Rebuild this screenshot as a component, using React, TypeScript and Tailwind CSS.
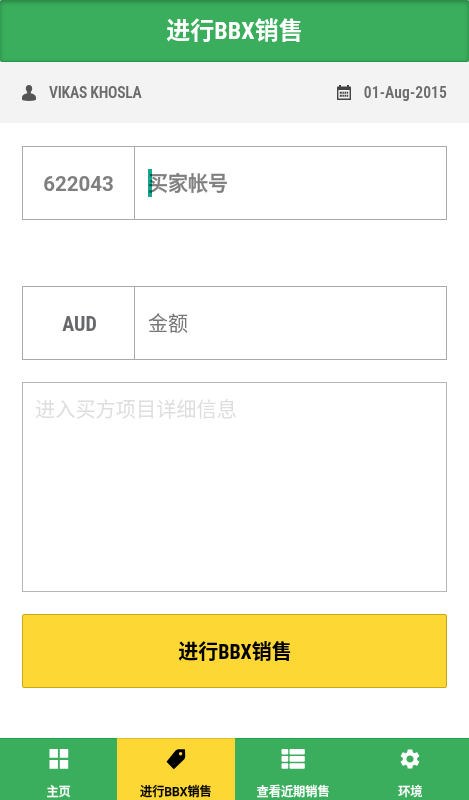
import type { ReactNode } from "react";

interface Tab {
    label: string;
    icon: ReactNode;
    active?: boolean;
}

const GridIcon = () => (
    <svg width="20" height="20" viewBox="0 0 20 20" fill="currentColor">
        <path d="M0.5 0h8.4v8.8H0.5zM10.8 0h8.4v8.8h-8.4zM0.5 11h8.4v8.8H0.5zM10.8 11h8.4v8.8h-8.4z" />
    </svg>
);

const TagIcon = () => (
    <svg width="20" height="21" viewBox="0 0 20 21" fill="currentColor">
        <path
            fillRule="evenodd"
            d="M9.8 1.3 12 .3H19L19.200 7.800 18.500 10 7.800 20.300 0.500 12.800ZM14.600 3a1.700 1.700 0 1 0 0 3.400a1.700 1.700 0 1 0 0-3.400Z"
        />
    </svg>
);

const ListIcon = () => (
    <svg width="24" height="20" viewBox="0 0 24 20" fill="currentColor">
        <rect x="0.500" y="0" width="6.700" height="5.600" rx="1" />
        <rect x="8.500" y="0" width="15.300" height="5.600" rx="1" />
        <rect x="0.500" y="7.100" width="6.700" height="5.600" rx="1" />
        <rect x="8.500" y="7.100" width="15.300" height="5.600" rx="1" />
        <rect x="0.500" y="14.200" width="6.700" height="5.600" rx="1" />
        <rect x="8.500" y="14.200" width="15.300" height="5.600" rx="1" />
    </svg>
);

const GearIcon = () => (
    <svg width="24" height="24" viewBox="0 0 24 24" fill="currentColor">
        <path d="M19.140 12.940c.04-.3.06-.61.06-.94 0-.32-.02-.64-.07-.94l2.030-1.580c.18-.14.23-.41.12-.61l-1.920-3.320c-.12-.22-.37-.29-.59-.22l-2.390.96c-.5-.38-1.030-.7-1.620-.94l-.36-2.540c-.04-.24-.24-.41-.48-.41h-3.840c-.24 0-.43.17-.47.41l-.36 2.540c-.59.24-1.130.57-1.620.94l-2.390-.96c-.22-.08-.47 0-.59.22L2.740 8.870c-.12.21-.08.47.12.61l2.030 1.580c-.05.3-.09.63-.09.94s.02.64.07.94l-2.030 1.580c-.18.14-.23.41-.12.61l1.920 3.320c.12.22.37.29.59.22l2.390-.96c.5.38 1.030.7 1.620.94l.36 2.540c.05.24.24.41.48.41h3.840c.24 0 .44-.17.47-.41l.36-2.540c.59-.24 1.130-.56 1.620-.94l2.390.96c.22.08.47 0 .59-.22l1.920-3.320c.12-.22.07-.47-.12-.61l-2.010-1.580zM12 15.600c-1.980 0-3.600-1.620-3.600-3.600s1.620-3.600 3.600-3.600 3.600 1.620 3.600 3.600-1.620 3.600-3.600 3.600z" />
    </svg>
);

const UserIcon = () => (
    <svg width="14" height="16" viewBox="0 0 14 16" fill="#555">
        <path d="M7 0c2.100 0 3.300 1.500 3.200 3.600-.1 1.700-.7 2.700-1.400 3.500v1.200c2.500.7 5.200 1.700 5.200 4.500v1.700c0 .7-2.500 1.500-7 1.500s-7-.8-7-1.500v-1.700c0-2.800 2.700-3.800 5.200-4.500V7.100C4.500 6.300 3.900 5.300 3.800 3.600 3.700 1.500 4.900 0 7 0z" />
    </svg>
);

const CalendarIcon = () => (
    <svg width="14" height="15" viewBox="0 0 14 15" fill="#444">
        <path fillRule="evenodd" d="M.6 1.500h12.800q.6 0 .6.6v12.300q0 .6-.6.6H.6q-.6 0-.6-.6V2.100q0-.6.6-.6zM1.400 5v8.600h11.200V5z" />
        <path d="M2 0h2v3H2zM10 0h2v3h-2z" />
        <path d="M2.800 6.700h2v2h-2zM5.400 6.700h1.500v2H5.400zM7.500 6.700h1.500v2H7.500zM9.600 6.700h1.600v2H9.600zM2.800 9.700h2v2h-2zM5.400 9.700h1.500v2H5.400zM7.500 9.700h1.500v2H7.500zM9.600 9.700h1.600v2H9.600z" />
    </svg>
);

const tabs: Tab[] = [
    { label: "主页", icon: <GridIcon /> },
    { label: "进行BBX销售", icon: <TagIcon />, active: true },
    { label: "查看近期销售", icon: <ListIcon /> },
    { label: "环境", icon: <GearIcon /> },
];

const condensed = "font-['Roboto_Condensed','Roboto','Noto_Sans_CJK_SC',sans-serif] [font-stretch:75%]";

const App = () => {
    return (
        <div className="flex h-[800px] w-[469px] flex-col overflow-hidden bg-white font-['Roboto','Noto_Sans_CJK_SC',sans-serif]">
            <header className="flex h-[62px] shrink-0 items-center justify-center rounded-[2px] border-b border-[#279449] bg-[#3aae5d] pt-px text-white shadow-[inset_0_2px_4px_#2b7f45]">
                <h1 className={`${condensed} text-[24px] leading-[36px] font-bold`}>进行BBX销售</h1>
            </header>

            <div className={`${condensed} flex h-[61px] shrink-0 items-center justify-between bg-[#f3f3f3] px-[22px] text-[15.600px] font-semibold text-[#6c6c6c]`}>
                <div className="flex items-center gap-[13px] pt-px">
                    <UserIcon />
                    <span className="pt-[2px] tracking-[-0.25px]">VIKAS KHOSLA</span>
                </div>
                <div className="flex items-center gap-[13px] pt-px">
                    <CalendarIcon />
                    <span className="pt-[2px] tracking-[0.1px]">01-Aug-2015</span>
                </div>
            </div>

            <main className="flex flex-1 flex-col px-[22px] pt-[23px]">
                <div className="flex h-[74px] border border-[#aaa] text-[20px] font-bold text-[#7f7f7f]">
                    <div className="flex w-[112px] items-center justify-center border-r border-[#aaa] pt-[2px] text-[20.500px]">622043</div>
                    <div className="relative flex flex-1 items-center pt-[2px] pl-[13px]">
                        <span className="font-medium [-webkit-text-stroke:0.35px_#7f7f7f]">买家帐号</span>
                        {/* text cursor */}
                        <span className="absolute top-[22px] left-[13px] h-[28px] w-[4px] bg-[#14a88f] mix-blend-multiply" />
                    </div>
                </div>

                <div className="mt-[66px] flex h-[74px] border border-[#aaa] text-[20px]">
                    <div className={`${condensed} flex w-[112px] items-center justify-center border-r border-[#aaa] pt-[2px] pl-[2px] font-bold text-[#67686b]`}>AUD</div>
                    <div className="flex flex-1 items-center pt-[2px] pl-[13px] text-[#777]">金额</div>
                </div>

                <div className="mt-[22px] h-[210px] border border-[#b5b5b5] px-[12px] pt-[12px] text-[20.200px] leading-[30px] text-[#dedede]">
                    进入买方项目详细信息
                </div>

                <button className={`${condensed} mt-[22px] h-[74px] rounded-[2px] border border-[#c8a914] bg-[#fdd734] pt-[2px] pl-px text-[20px] font-bold text-black`}>
                    进行BBX销售
                </button>
            </main>

            <nav className="grid h-[62px] shrink-0 grid-cols-4">
                {tabs.map((tab) => (
                    <div
                        key={tab.label}
                        className={
                            tab.active
                                ? "flex flex-col items-center border-t border-[#e0be2c] bg-[#fdd734] pt-[7px] text-black"
                                : "flex flex-col items-center border-t border-[#14a850] bg-[#3aae5d] pt-[7px] text-white"
                        }
                    >
                        <div className="flex h-[26px] items-center">{tab.icon}</div>
                        <span className="mt-[11px] text-[12.200px] leading-[18px] font-medium whitespace-nowrap [-webkit-text-stroke:0.25px_currentColor]">{tab.label}</span>
                    </div>
                ))}
            </nav>
        </div>
    );
};

export default App;
